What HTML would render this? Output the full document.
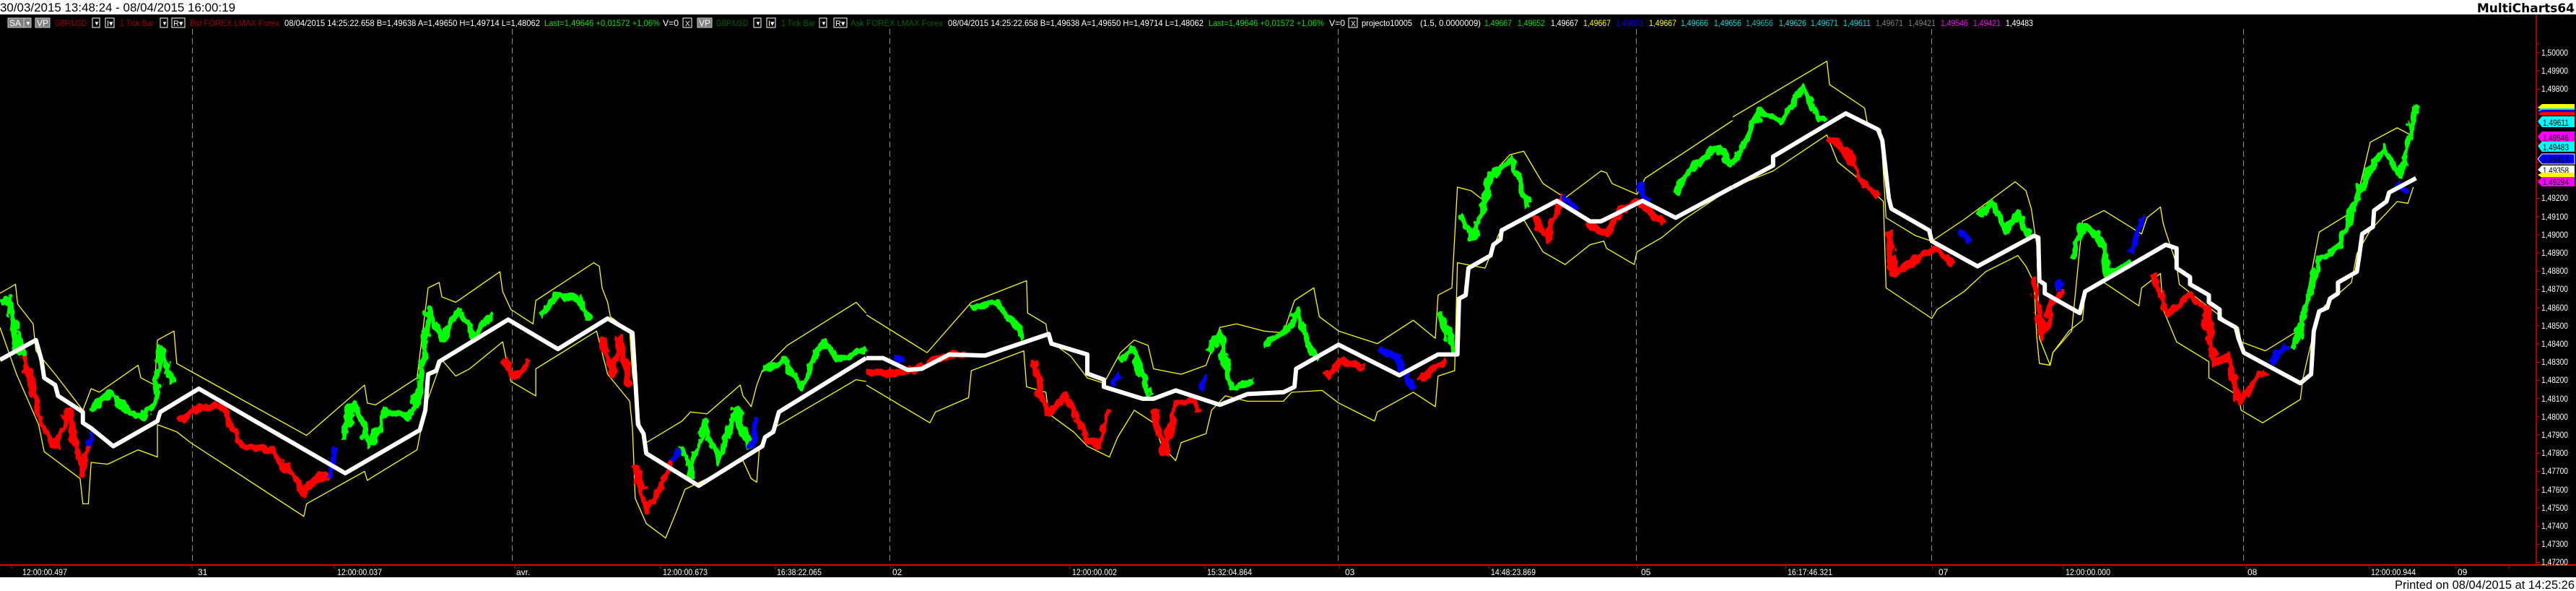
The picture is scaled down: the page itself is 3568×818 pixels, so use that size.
<!DOCTYPE html>
<html><head><meta charset="utf-8"><style>
html,body{margin:0;padding:0;background:#fff;width:3568px;height:818px;overflow:hidden}
svg{display:block}
text{font-family:"Liberation Sans Narrow","Liberation Sans",sans-serif}
</style></head><body>
<svg width="3568" height="818" viewBox="0 0 3568 818" xmlns="http://www.w3.org/2000/svg">
<defs>
<filter id="j" x="-2%" y="-10%" width="104%" height="120%">
<feTurbulence type="fractalNoise" baseFrequency="0.06 0.025" numOctaves="3" seed="4" result="n"/>
<feDisplacementMap in="SourceGraphic" in2="n" scale="22" xChannelSelector="R" yChannelSelector="G"/>
</filter>
</defs>
<rect x="0" y="0" width="3568" height="20" fill="#fff"/>
<rect x="0" y="20" width="3568" height="779" fill="#000"/>
<rect x="0" y="799" width="3568" height="19" fill="#fff"/>
<text x="0" y="16" font-size="17" fill="#000" textLength="326" lengthAdjust="spacingAndGlyphs">30/03/2015 13:48:24 - 08/04/2015 16:00:19</text>
<text x="3566" y="17" font-size="17" font-weight="bold" fill="#000" text-anchor="end" style="font-family:'DejaVu Sans','Liberation Sans',sans-serif">MultiCharts64</text>
<text x="3317" y="815" font-size="17" fill="#000" textLength="249" lengthAdjust="spacingAndGlyphs">Printed on 08/04/2015 at 14:25:26</text>

<g font-size="12">
<rect x="11" y="25" width="22" height="13" fill="#808080" stroke="#ccc" stroke-width="1"/><text x="13" y="36" fill="#fff">SA</text>
<rect x="33" y="25" width="10" height="13" fill="#808080" stroke="#ccc"/><text x="35" y="35" fill="#fff" font-size="8">▼</text>
<rect x="49" y="25" width="20" height="13" fill="#808080" stroke="#ccc"/><text x="51" y="36" fill="#fff">VP</text>
<text x="76" y="36" fill="#a00000" textLength="44" lengthAdjust="spacingAndGlyphs">GBP/USD</text>
<rect x="128" y="25" width="10" height="13" fill="#000" stroke="#fff"/><text x="130" y="35" fill="#fff" font-size="8">▼</text>
<rect x="146" y="25" width="12" height="13" fill="#000" stroke="#fff"/><text x="148" y="36" fill="#fff" font-size="11">I▾</text>
<text x="166" y="36" fill="#a00000" textLength="47" lengthAdjust="spacingAndGlyphs">1 Tick Bar</text>
<rect x="222" y="25" width="10" height="13" fill="#000" stroke="#fff"/><text x="224" y="35" fill="#fff" font-size="8">▼</text>
<rect x="238" y="25" width="18" height="13" fill="#000" stroke="#fff"/><text x="240" y="36" fill="#fff" font-size="11">R▾</text>
<text x="263" y="36" fill="#a00000" textLength="124" lengthAdjust="spacingAndGlyphs">Bid  FOREX  LMAX  Forex</text>
<text x="394" y="36" fill="#fff" textLength="354" lengthAdjust="spacingAndGlyphs">08/04/2015  14:25:22.658  B=1,49638  A=1,49650  H=1,49714  L=1,48062</text>
<text x="754" y="36" fill="#00e000" textLength="160" lengthAdjust="spacingAndGlyphs">Last=1,49646  +0,01572  +1,06%</text>
<text x="918" y="36" fill="#fff" textLength="22" lengthAdjust="spacingAndGlyphs">V=0</text>
<rect x="946" y="25" width="12" height="13" fill="#000" stroke="#fff"/><text x="949" y="36" fill="#fff" font-size="10">X</text>
<rect x="966" y="25" width="20" height="13" fill="#808080" stroke="#ccc"/><text x="968" y="36" fill="#fff">VP</text>
<text x="992" y="36" fill="#006400" textLength="44" lengthAdjust="spacingAndGlyphs">GBP/USD</text>
<rect x="1044" y="25" width="10" height="13" fill="#000" stroke="#fff"/><text x="1046" y="35" fill="#fff" font-size="8">▼</text>
<rect x="1062" y="25" width="12" height="13" fill="#000" stroke="#fff"/><text x="1064" y="36" fill="#fff" font-size="11">I▾</text>
<text x="1082" y="36" fill="#006400" textLength="47" lengthAdjust="spacingAndGlyphs">1 Tick Bar</text>
<rect x="1135" y="25" width="10" height="13" fill="#000" stroke="#fff"/><text x="1137" y="35" fill="#fff" font-size="8">▼</text>
<rect x="1155" y="25" width="18" height="13" fill="#000" stroke="#fff"/><text x="1157" y="36" fill="#fff" font-size="11">R▾</text>
<text x="1178" y="36" fill="#006400" textLength="128" lengthAdjust="spacingAndGlyphs">Ask  FOREX  LMAX  Forex</text>
<text x="1313" y="36" fill="#fff" textLength="354" lengthAdjust="spacingAndGlyphs">08/04/2015  14:25:22.658  B=1,49638  A=1,49650  H=1,49714  L=1,48062</text>
<text x="1674" y="36" fill="#00e000" textLength="160" lengthAdjust="spacingAndGlyphs">Last=1,49646  +0,01572  +1,06%</text>
<text x="1841" y="36" fill="#fff" textLength="22" lengthAdjust="spacingAndGlyphs">V=0</text>
<rect x="1868" y="25" width="12" height="13" fill="#000" stroke="#fff"/><text x="1871" y="36" fill="#fff" font-size="10">X</text>
<text x="1886" y="36" fill="#fff" textLength="70" lengthAdjust="spacingAndGlyphs">projecto10005</text>
<text x="1967" y="36" fill="#fff" textLength="84" lengthAdjust="spacingAndGlyphs">(1.5,  0.0000009)</text>
<g>
<text x="2056" y="36" fill="#00e000" textLength="38" lengthAdjust="spacingAndGlyphs">1,49667</text>
<text x="2102" y="36" fill="#00e000" textLength="38" lengthAdjust="spacingAndGlyphs">1,49652</text>
<text x="2148" y="36" fill="#fff" textLength="38" lengthAdjust="spacingAndGlyphs">1,49667</text>
<text x="2193" y="36" fill="#ffff00" textLength="38" lengthAdjust="spacingAndGlyphs">1,49667</text>
<text x="2238" y="36" fill="#0000ff" textLength="38" lengthAdjust="spacingAndGlyphs">1,49653</text>
<text x="2284" y="36" fill="#ffff00" textLength="38" lengthAdjust="spacingAndGlyphs">1,49667</text>
<text x="2328" y="36" fill="#00e0e0" textLength="38" lengthAdjust="spacingAndGlyphs">1,49666</text>
<text x="2374" y="36" fill="#00e0e0" textLength="38" lengthAdjust="spacingAndGlyphs">1,49656</text>
<text x="2418" y="36" fill="#00c0c0" textLength="38" lengthAdjust="spacingAndGlyphs">1,49656</text>
<text x="2464" y="36" fill="#00e0e0" textLength="38" lengthAdjust="spacingAndGlyphs">1,49626</text>
<text x="2508" y="36" fill="#00e0e0" textLength="38" lengthAdjust="spacingAndGlyphs">1,49671</text>
<text x="2553" y="36" fill="#00e0e0" textLength="38" lengthAdjust="spacingAndGlyphs">1,49611</text>
<text x="2598" y="36" fill="#808080" textLength="38" lengthAdjust="spacingAndGlyphs">1,49671</text>
<text x="2643" y="36" fill="#808080" textLength="38" lengthAdjust="spacingAndGlyphs">1,49421</text>
<text x="2688" y="36" fill="#ff00ff" textLength="38" lengthAdjust="spacingAndGlyphs">1,49546</text>
<text x="2733" y="36" fill="#ff00ff" textLength="38" lengthAdjust="spacingAndGlyphs">1,49421</text>
<text x="2778" y="36" fill="#fff" textLength="38" lengthAdjust="spacingAndGlyphs">1,49483</text>
</g>
</g>

<g stroke="#909090" stroke-width="1" stroke-dasharray="8,5">
<line x1="266.5" y1="40" x2="266.5" y2="782"/><line x1="709.5" y1="40" x2="709.5" y2="782"/>
<line x1="1232.5" y1="40" x2="1232.5" y2="782"/><line x1="1853.5" y1="40" x2="1853.5" y2="782"/>
<line x1="2266.5" y1="40" x2="2266.5" y2="782"/><line x1="2675.5" y1="40" x2="2675.5" y2="782"/>
<line x1="3107.5" y1="40" x2="3107.5" y2="782"/>
</g>

<g fill="none" stroke-linejoin="round">
<g transform="translate(0,20) scale(0.7651,0.498)">
<g stroke="#ffff00" stroke-width="1.3">
<polyline vector-effect="non-scaling-stroke" points="0,775 28,750 32,805 60,860 65,935 100,1000 150,1100 165,1040 180,1050 250,975 255,1010 280,1030 285,905 315,880 320,970 355,1000 555,1170 660,1030 665,1080 680,1085 755,1010 775,760 795,745 800,785 825,800 905,715 910,770 925,820 965,860 970,795 1075,690 1085,700 1090,760 1100,800 1105,840 1140,880 1145,1000 1160,1150 1170,1190 1235,1130 1250,1105 1280,1110 1340,1030 1345,1060 1360,1090 1370,1030 1380,990 1425,920 1550,800 1568,830"/>
<polyline vector-effect="non-scaling-stroke" points="0,870 30,1000 70,1140 80,1215 145,1290 150,1360 160,1360 165,1245 195,1250 250,1210 285,1230 285,1140 320,1160 345,1190 550,1395 555,1360 660,1270 665,1295 675,1285 755,1210 770,1090 800,960 825,1005 850,985 910,910 925,1020 970,1060 970,985 1080,880 1100,1000 1140,1075 1145,1150 1150,1345 1170,1415 1205,1455 1225,1380 1240,1320 1280,1290 1345,1240 1360,1290 1370,1300 1375,1200 1400,1150 1550,1015 1568,1020"/>
</g>
<g filter="url(#j)" stroke-width="9">
<polyline vector-effect="non-scaling-stroke" stroke="#00ff00" points="0,800 15,790 30,900 40,950"/>
<polyline vector-effect="non-scaling-stroke" stroke="#ff0000" points="40,950 60,1040 80,1150 100,1200 125,1100 150,1280 160,1200"/>
<polyline vector-effect="non-scaling-stroke" stroke="#0000ff" points="160,1200 165,1150"/>
<polyline vector-effect="non-scaling-stroke" stroke="#00ff00" points="165,1100 200,1050 230,1100 260,1120 280,1080 290,920 310,1020"/>
<polyline vector-effect="non-scaling-stroke" stroke="#ff0000" points="325,1130 360,1090 400,1090 440,1200 490,1210 520,1260 550,1330 580,1280 595,1290"/>
<polyline vector-effect="non-scaling-stroke" stroke="#0000ff" points="595,1290 610,1200"/>
<polyline vector-effect="non-scaling-stroke" stroke="#00ff00" points="620,1180 640,1080 670,1200 700,1100 740,1120 760,1050 775,820 800,900 830,820 860,900 890,830"/>
<polyline vector-effect="non-scaling-stroke" stroke="#ff0000" points="910,960 930,1010 960,960"/>
<polyline vector-effect="non-scaling-stroke" stroke="#00ff00" points="975,840 1010,780 1045,790 1070,850"/>
<polyline vector-effect="non-scaling-stroke" stroke="#ff0000" points="1090,900 1110,1000 1120,900 1140,1030"/>
<polyline vector-effect="non-scaling-stroke" stroke="#ff0000" points="1150,1250 1170,1380 1200,1310 1215,1240"/>
<polyline vector-effect="non-scaling-stroke" stroke="#0000ff" points="1215,1240 1230,1210"/>
<polyline vector-effect="non-scaling-stroke" stroke="#00ff00" points="1235,1200 1250,1280 1275,1130 1300,1250 1330,1100 1360,1210"/>
<polyline vector-effect="non-scaling-stroke" stroke="#0000ff" points="1360,1210 1370,1120"/>
<polyline vector-effect="non-scaling-stroke" stroke="#00ff00" points="1380,990 1420,960 1450,1040 1490,910 1520,960 1568,930"/>
</g>
<polyline vector-effect="non-scaling-stroke" stroke="#fff" stroke-width="6" points="0,960 65,905 75,960 80,1010 100,1030 105,1060 150,1105 150,1135 165,1150 205,1200 285,1130 290,1105 360,1040 625,1275 760,1155 770,1100 775,1000 790,990 795,965 920,848 1010,930 1100,845 1145,885 1150,1010 1155,1140 1165,1165 1170,1220 1265,1310 1380,1200 1385,1175 1400,1160 1410,1105 1568,955"/>
</g>
<g transform="translate(1200,20) scale(0.7651,0.498)">
<g stroke="#ffff00" stroke-width="1.3">
<polyline vector-effect="non-scaling-stroke" points="0,835 110,940 190,800 290,740 292,830 325,860 330,905 370,950 400,1010 430,1025 460,940 485,905 510,920 520,985 570,1000 615,975 640,870 670,860 720,880 755,885 775,795 810,760 820,840 855,880 925,915 990,850 1030,900 1035,780 1060,760 1070,480 1095,490 1120,520 1135,440 1165,390 1190,380 1215,445 1225,470 1265,510 1330,435 1340,440 1350,470 1395,500 1410,455 1568,295"/>
<polyline vector-effect="non-scaling-stroke" points="0,1030 115,1135 125,1105 185,1065 190,990 285,935 290,1035 325,1050 330,1110 375,1160 400,1200 440,1230 455,1175 485,1100 520,1135 535,1200 560,1240 570,1190 615,1165 625,1100 650,1060 690,1075 755,1075 770,1050 825,1045 855,1080 920,1130 925,1105 990,1050 1030,1090 1035,1005 1065,990 1070,690 1120,705 1145,610 1190,570 1225,660 1265,695 1310,640 1335,630 1340,650 1390,695 1395,660 1440,620 1480,570 1568,480"/>
</g>
<g filter="url(#j)" stroke-width="9">
<polyline vector-effect="non-scaling-stroke" stroke="#ff0000" points="0,990 40,1000 80,990 120,960 180,940"/>
<polyline vector-effect="non-scaling-stroke" stroke="#0000ff" points="50,950 70,960"/>
<polyline vector-effect="non-scaling-stroke" stroke="#00ff00" points="190,820 230,800 270,860 285,900"/>
<polyline vector-effect="non-scaling-stroke" stroke="#ff0000" points="300,960 330,1110 360,1060 400,1180 420,1200 440,1100"/>
<polyline vector-effect="non-scaling-stroke" stroke="#0000ff" points="445,1030 460,1000"/>
<polyline vector-effect="non-scaling-stroke" stroke="#00ff00" points="460,960 480,930 500,1000 515,1060"/>
<polyline vector-effect="non-scaling-stroke" stroke="#ff0000" points="520,1100 540,1220 560,1080 590,1070 600,1100"/>
<polyline vector-effect="non-scaling-stroke" stroke="#0000ff" points="605,1040 615,1000"/>
<polyline vector-effect="non-scaling-stroke" stroke="#00ff00" points="620,940 640,890 660,1040 700,1020"/>
<polyline vector-effect="non-scaling-stroke" stroke="#00ff00" points="720,920 760,880 780,820 800,920 820,960"/>
<polyline vector-effect="non-scaling-stroke" stroke="#ff0000" points="830,1010 860,960 900,980"/>
<polyline vector-effect="non-scaling-stroke" stroke="#0000ff" points="930,930 960,950 990,1040"/>
<polyline vector-effect="non-scaling-stroke" stroke="#ff0000" points="1000,1020 1030,980 1050,960"/>
<polyline vector-effect="non-scaling-stroke" stroke="#00ff00" points="1040,830 1065,950"/>
<polyline vector-effect="non-scaling-stroke" stroke="#00ff00" points="1075,560 1100,620 1130,450 1170,400 1190,500 1200,540"/>
<polyline vector-effect="non-scaling-stroke" stroke="#ff0000" points="1210,560 1230,630 1260,500"/>
<polyline vector-effect="non-scaling-stroke" stroke="#0000ff" points="1260,500 1280,540"/>
<polyline vector-effect="non-scaling-stroke" stroke="#ff0000" points="1300,580 1340,610 1370,540 1400,520 1440,580"/>
<polyline vector-effect="non-scaling-stroke" stroke="#0000ff" points="1400,470 1415,520"/>
<polyline vector-effect="non-scaling-stroke" stroke="#00ff00" points="1460,500 1500,420 1540,370 1568,420"/>
</g>
<polyline vector-effect="non-scaling-stroke" stroke="#fff" stroke-width="6" points="0,955 30,955 75,988 100,985 150,945 215,948 330,888 335,915 400,945 400,998 430,1015 430,1035 500,1068 520,1068 560,1045 640,1085 690,1055 755,1050 775,1035 778,985 855,918 965,1003 1035,945 1070,945 1073,790 1085,780 1090,705 1130,670 1135,640 1148,625 1150,600 1250,518 1310,575 1330,575 1405,518 1465,565 1568,480"/>
</g>
<g transform="translate(2400,20) scale(0.7452,0.498)">
<g stroke="#ffff00" stroke-width="1.3">
<polyline vector-effect="non-scaling-stroke" points="0,285 175,130 180,195 245,260 250,300 275,320 280,440 285,565 340,615 370,630 430,570 525,465 545,490 555,540 565,640 570,900 590,975 595,940 630,880 650,575 690,545 760,610 770,565 795,535 800,580 805,605 825,695 830,750 925,860 940,870 945,910 990,935 1055,875 1060,840 1090,605 1155,545 1185,355 1235,315 1260,335 1270,250"/>
<polyline vector-effect="non-scaling-stroke" points="0,480 75,435 175,335 195,410 245,470 280,520 285,760 370,845 380,820 430,770 470,715 530,670 545,700 560,745 565,895 570,970 590,975 595,940 625,880 650,850 655,775 690,745 755,810 760,760 795,720 800,820 825,910 885,965 885,1010 940,1060 945,1100 985,1135 1055,1070 1060,1010 1085,850 1100,810 1150,745 1160,665 1185,600 1235,520 1255,525 1265,480"/>
</g>
<g filter="url(#j)" stroke-width="9">
<polyline vector-effect="non-scaling-stroke" stroke="#00ff00" points="0,420 50,270 90,300 130,200 165,300"/>
<polyline vector-effect="non-scaling-stroke" stroke="#ff0000" points="180,340 210,380 240,460 270,510"/>
<polyline vector-effect="non-scaling-stroke" stroke="#ff0000" points="290,600 300,720 340,680 380,650 410,700"/>
<polyline vector-effect="non-scaling-stroke" stroke="#0000ff" points="420,600 440,630"/>
<polyline vector-effect="non-scaling-stroke" stroke="#00ff00" points="460,560 480,520 510,600 530,550 550,620"/>
<polyline vector-effect="non-scaling-stroke" stroke="#ff0000" points="560,730 575,900 590,820 610,760"/>
<polyline vector-effect="non-scaling-stroke" stroke="#0000ff" points="600,760 615,740"/>
<polyline vector-effect="non-scaling-stroke" stroke="#00ff00" points="630,680 650,590 680,610 700,720 740,690"/>
<polyline vector-effect="non-scaling-stroke" stroke="#0000ff" points="740,660 765,560"/>
<polyline vector-effect="non-scaling-stroke" stroke="#ff0000" points="780,720 810,830 850,780 880,820 895,970 920,950 940,1080 960,1040 990,990"/>
<polyline vector-effect="non-scaling-stroke" stroke="#0000ff" points="1000,970 1030,920"/>
<polyline vector-effect="non-scaling-stroke" stroke="#00ff00" points="1040,930 1065,820 1090,680 1130,640 1170,470 1210,370 1240,450 1260,330 1270,250"/>
<polyline vector-effect="non-scaling-stroke" stroke="#0000ff" points="1235,470 1250,500"/>
</g>
<polyline vector-effect="non-scaling-stroke" stroke="#fff" stroke-width="6" points="0,480 75,420 75,395 210,275 270,320 278,350 290,510 295,540 365,600 370,630 455,700 560,615 568,620 570,740 580,750 580,775 645,830 655,770 805,640 825,650 825,705 850,730 850,750 885,780 885,800 905,820 905,845 935,870 940,900 950,940 1055,1025 1075,1000 1080,880 1090,825 1105,815 1110,790 1125,775 1125,745 1160,715 1165,665 1170,610 1190,590 1192,545 1215,520 1220,495 1270,455"/>
</g>
</g>

<line x1="0" y1="782" x2="3568" y2="782" stroke="#e00000" stroke-width="2"/>
<line x1="3513" y1="20" x2="3513" y2="782" stroke="#e00000" stroke-width="1.5"/>
<g stroke="#e00000" stroke-width="1">
<line x1="3513" y1="60.4" x2="3517" y2="60.4"/>
<line x1="3513" y1="73" x2="3518" y2="73"/><line x1="3513" y1="98.2" x2="3518" y2="98.2"/><line x1="3513" y1="123.4" x2="3518" y2="123.4"/><line x1="3513" y1="148.6" x2="3518" y2="148.6"/><line x1="3513" y1="173.8" x2="3518" y2="173.8"/><line x1="3513" y1="199" x2="3518" y2="199"/><line x1="3513" y1="224.2" x2="3518" y2="224.2"/><line x1="3513" y1="249.4" x2="3518" y2="249.4"/><line x1="3513" y1="274.6" x2="3518" y2="274.6"/><line x1="3513" y1="299.8" x2="3518" y2="299.8"/><line x1="3513" y1="325" x2="3518" y2="325"/><line x1="3513" y1="350.2" x2="3518" y2="350.2"/><line x1="3513" y1="375.4" x2="3518" y2="375.4"/><line x1="3513" y1="400.6" x2="3518" y2="400.6"/><line x1="3513" y1="425.8" x2="3518" y2="425.8"/><line x1="3513" y1="451" x2="3518" y2="451"/><line x1="3513" y1="476.2" x2="3518" y2="476.2"/><line x1="3513" y1="501.4" x2="3518" y2="501.4"/><line x1="3513" y1="526.6" x2="3518" y2="526.6"/><line x1="3513" y1="551.8" x2="3518" y2="551.8"/><line x1="3513" y1="577" x2="3518" y2="577"/><line x1="3513" y1="602.2" x2="3518" y2="602.2"/><line x1="3513" y1="627.4" x2="3518" y2="627.4"/><line x1="3513" y1="652.6" x2="3518" y2="652.6"/><line x1="3513" y1="677.8" x2="3518" y2="677.8"/><line x1="3513" y1="703" x2="3518" y2="703"/><line x1="3513" y1="728.2" x2="3518" y2="728.2"/><line x1="3513" y1="753.4" x2="3518" y2="753.4"/><line x1="3513" y1="778.6" x2="3518" y2="778.6"/>
<line x1="16" y1="782" x2="16" y2="787"/><line x1="266" y1="782" x2="266" y2="787"/><line x1="463" y1="782" x2="463" y2="787"/><line x1="713" y1="782" x2="713" y2="787"/><line x1="915" y1="782" x2="915" y2="787"/><line x1="1074" y1="782" x2="1074" y2="787"/><line x1="1234" y1="782" x2="1234" y2="787"/><line x1="1482" y1="782" x2="1482" y2="787"/><line x1="1669" y1="782" x2="1669" y2="787"/><line x1="1855" y1="782" x2="1855" y2="787"/><line x1="2062" y1="782" x2="2062" y2="787"/><line x1="2268" y1="782" x2="2268" y2="787"/><line x1="2473" y1="782" x2="2473" y2="787"/><line x1="2677" y1="782" x2="2677" y2="787"/><line x1="2858" y1="782" x2="2858" y2="787"/><line x1="3111" y1="782" x2="3111" y2="787"/><line x1="3282" y1="782" x2="3282" y2="787"/><line x1="3402" y1="782" x2="3402" y2="787"/><line x1="3475" y1="782" x2="3475" y2="787"/>
</g>
<g fill="#fff" font-size="12">
<text x="3520" y="77" textLength="37" lengthAdjust="spacingAndGlyphs">1,50000</text>
<text x="3520" y="102" textLength="37" lengthAdjust="spacingAndGlyphs">1,49900</text>
<text x="3520" y="127" textLength="37" lengthAdjust="spacingAndGlyphs">1,49800</text>
<text x="3520" y="278" textLength="37" lengthAdjust="spacingAndGlyphs">1,49200</text>
<text x="3520" y="304" textLength="37" lengthAdjust="spacingAndGlyphs">1,49100</text>
<text x="3520" y="329" textLength="37" lengthAdjust="spacingAndGlyphs">1,49000</text>
<text x="3520" y="354" textLength="37" lengthAdjust="spacingAndGlyphs">1,48900</text>
<text x="3520" y="379" textLength="37" lengthAdjust="spacingAndGlyphs">1,48800</text>
<text x="3520" y="404" textLength="37" lengthAdjust="spacingAndGlyphs">1,48700</text>
<text x="3520" y="430" textLength="37" lengthAdjust="spacingAndGlyphs">1,48600</text>
<text x="3520" y="455" textLength="37" lengthAdjust="spacingAndGlyphs">1,48500</text>
<text x="3520" y="480" textLength="37" lengthAdjust="spacingAndGlyphs">1,48400</text>
<text x="3520" y="505" textLength="37" lengthAdjust="spacingAndGlyphs">1,48300</text>
<text x="3520" y="530" textLength="37" lengthAdjust="spacingAndGlyphs">1,48200</text>
<text x="3520" y="556" textLength="37" lengthAdjust="spacingAndGlyphs">1,48100</text>
<text x="3520" y="581" textLength="37" lengthAdjust="spacingAndGlyphs">1,48000</text>
<text x="3520" y="606" textLength="37" lengthAdjust="spacingAndGlyphs">1,47900</text>
<text x="3520" y="631" textLength="37" lengthAdjust="spacingAndGlyphs">1,47800</text>
<text x="3520" y="656" textLength="37" lengthAdjust="spacingAndGlyphs">1,47700</text>
<text x="3520" y="682" textLength="37" lengthAdjust="spacingAndGlyphs">1,47600</text>
<text x="3520" y="707" textLength="37" lengthAdjust="spacingAndGlyphs">1,47500</text>
<text x="3520" y="732" textLength="37" lengthAdjust="spacingAndGlyphs">1,47400</text>
<text x="3520" y="757" textLength="37" lengthAdjust="spacingAndGlyphs">1,47300</text>
<text x="3520" y="782" textLength="37" lengthAdjust="spacingAndGlyphs">1,47200</text>
</g>
<g font-size="12">
<polygon points="3515,149 3521,144 3566,144 3566,152 3521,152" fill="#ffff00"/>
<polygon points="3515,153 3521,150 3566,150 3566,156 3521,156" fill="#00e0e0"/>
<polygon points="3515,155 3521,152 3566,152 3566,157 3521,157" fill="#0000ff"/>
<polygon points="3515,158 3521,155 3566,155 3566,160 3521,160" fill="#ff0000"/>
<polygon points="3515,168 3521,161 3566,161 3566,176 3521,176" fill="#00ffff"/><text x="3522" y="174" fill="#000" textLength="36" lengthAdjust="spacingAndGlyphs">1,49611</text>
<polygon points="3515,189 3521,182 3566,182 3566,197 3521,197" fill="#ff00ff"/><text x="3522" y="195" fill="#000" textLength="36" lengthAdjust="spacingAndGlyphs">1,49546</text>
<polygon points="3515,202 3521,196 3566,196 3566,210 3521,210" fill="#00ffff"/><text x="3522" y="208" fill="#000" textLength="36" lengthAdjust="spacingAndGlyphs">1,49483</text>
<polygon points="3515,220 3521,213 3566,213 3566,227 3521,227" fill="#0000ff" stroke="#fff" stroke-width="1"/><text x="3522" y="225" fill="#000" textLength="36" lengthAdjust="spacingAndGlyphs">1,49414</text>
<polygon points="3515,235 3521,229 3566,229 3566,240 3521,240" fill="#fff"/><text x="3522" y="240" fill="#000" textLength="36" lengthAdjust="spacingAndGlyphs">1,49358</text>
<polygon points="3515,242 3521,239 3566,239 3566,246 3521,246" fill="#ffff00"/>
<polygon points="3515,252 3521,245 3566,245 3566,258 3521,258" fill="#ff00ff"/><text x="3522" y="256" fill="#000" textLength="36" lengthAdjust="spacingAndGlyphs">1,49294</text>
</g>
<g fill="#fff" font-size="12">
<text x="31" y="796" textLength="62" lengthAdjust="spacingAndGlyphs">12:00:00.497</text>
<text x="274" y="796">31</text>
<text x="467" y="796" textLength="62" lengthAdjust="spacingAndGlyphs">12:00:00.037</text>
<text x="715" y="796">avr.</text>
<text x="918" y="796" textLength="62" lengthAdjust="spacingAndGlyphs">12:00:00.673</text>
<text x="1076" y="796" textLength="62" lengthAdjust="spacingAndGlyphs">16:38:22.065</text>
<text x="1236" y="796">02</text>
<text x="1485" y="796" textLength="62" lengthAdjust="spacingAndGlyphs">12:00:00.002</text>
<text x="1672" y="796" textLength="62" lengthAdjust="spacingAndGlyphs">15:32:04.864</text>
<text x="1863" y="796">03</text>
<text x="2065" y="796" textLength="62" lengthAdjust="spacingAndGlyphs">14:48:23.869</text>
<text x="2273" y="796">05</text>
<text x="2476" y="796" textLength="62" lengthAdjust="spacingAndGlyphs">16:17:46.321</text>
<text x="2685" y="796">07</text>
<text x="2861" y="796" textLength="62" lengthAdjust="spacingAndGlyphs">12:00:00.000</text>
<text x="3113" y="796">08</text>
<text x="3284" y="796" textLength="62" lengthAdjust="spacingAndGlyphs">12:00:00.944</text>
<text x="3404" y="796">09</text>
</g>
</svg>
</body></html>
